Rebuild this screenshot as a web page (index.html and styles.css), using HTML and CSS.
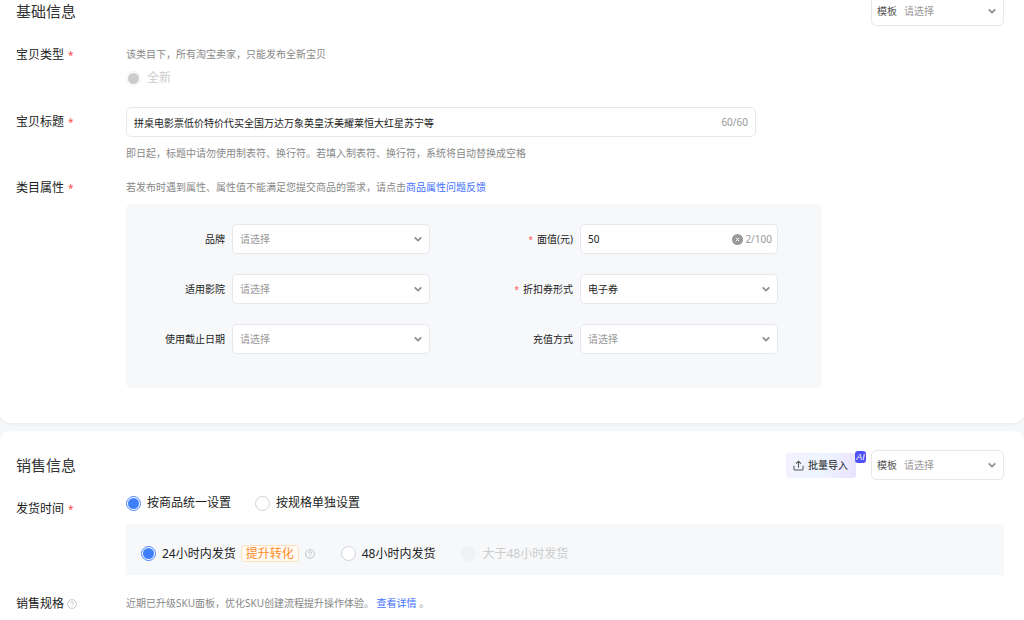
FILE: index.html
```html
<!DOCTYPE html>
<html lang="zh-CN">
<head>
    <meta charset="UTF-8">
    <meta name="viewport" content="width=device-width, initial-scale=1.0">
    <title>发布宝贝</title>
    <link rel="stylesheet" href="styles.css">
</head>
<body>
    <svg class="sprite" aria-hidden="true">
        <symbol id="arrow" viewBox="0 0 8 8">
            <path d="M0.7 2.3L4 5.5L7.3 2.3" fill="none" stroke="#8c8c8c" stroke-width="1.7"/>
        </symbol>
        <symbol id="help" viewBox="0 0 10 10">
            <circle cx="5" cy="5" r="4.4" fill="none" stroke="#b8b8b8" stroke-width="0.8"/>
            <path d="M3.6 4.1C3.6 2.2 6.5 2.2 6.5 4C6.5 5 5 5 5 6.1M5 6.9V7.7" fill="none" stroke="#b8b8b8" stroke-width="0.8"/>
        </symbol>
    </svg>

    <section class="card card-base">
        <div class="card-header">
            <h2>基础信息</h2>
            <div class="field template">
                <label for="baseTemplate">模板</label>
                <select id="baseTemplate"><option>请选择</option></select>
                <svg class="arrow"><use href="#arrow"/></svg>
            </div>
        </div>

        <div class="row row-type">
            <div class="row-label">宝贝类型<span class="required">*</span></div>
            <div class="row-content">
                <p class="hint">该类目下，所有淘宝卖家，只能发布全新宝贝</p>
                <label class="radio disabled"><input type="radio" name="type" checked disabled>全新</label>
            </div>
        </div>

        <div class="row row-title">
            <label class="row-label tall" for="title">宝贝标题<span class="required">*</span></label>
            <div class="row-content">
                <div class="field title-field">
                    <input type="text" id="title" value="拼桌电影票低价特价代买全国万达万象英皇沃美耀莱恒大红星苏宁等">
                    <span class="count">60/60</span>
                </div>
                <p class="hint">即日起，标题中请勿使用制表符、换行符。若填入制表符、换行符，系统将自动替换成空格</p>
            </div>
        </div>

        <div class="row">
            <div class="row-label">类目属性<span class="required">*</span></div>
            <div class="row-content">
                <p class="hint">若发布时遇到属性、属性值不能满足您提交商品的需求，请点击<a href="#">商品属性问题反馈</a></p>
                <div class="attrs">
                    <div class="attr">
                        <label for="brand">品牌</label>
                        <div class="field">
                            <select id="brand"><option>请选择</option></select>
                            <svg class="arrow"><use href="#arrow"/></svg>
                        </div>
                    </div>
                    <div class="attr">
                        <label for="price"><span class="required">*</span>面值(元)</label>
                        <div class="field price-field">
                            <input type="text" id="price" value="50">
                            <button type="button" class="clear" aria-label="清除">
                                <svg viewBox="0 0 11 11"><circle cx="5.5" cy="5.5" r="5.5" fill="#999"/><path d="M3.8 3.8L7.2 7.2M7.2 3.8L3.8 7.2" stroke="#fff" stroke-width="1"/></svg>
                            </button>
                            <span class="count">2/100</span>
                        </div>
                    </div>
                    <div class="attr">
                        <label for="cinema">适用影院</label>
                        <div class="field">
                            <select id="cinema"><option>请选择</option></select>
                            <svg class="arrow"><use href="#arrow"/></svg>
                        </div>
                    </div>
                    <div class="attr">
                        <label for="coupon"><span class="required">*</span>折扣券形式</label>
                        <div class="field">
                            <select id="coupon" class="filled"><option>电子券</option></select>
                            <svg class="arrow"><use href="#arrow"/></svg>
                        </div>
                    </div>
                    <div class="attr">
                        <label for="deadline">使用截止日期</label>
                        <div class="field">
                            <select id="deadline"><option>请选择</option></select>
                            <svg class="arrow"><use href="#arrow"/></svg>
                        </div>
                    </div>
                    <div class="attr">
                        <label for="recharge">充值方式</label>
                        <div class="field">
                            <select id="recharge"><option>请选择</option></select>
                            <svg class="arrow"><use href="#arrow"/></svg>
                        </div>
                    </div>
                </div>
            </div>
        </div>
    </section>

    <section class="card card-sale">
        <div class="card-header">
            <h2>销售信息</h2>
            <button type="button" class="import">
                <svg viewBox="0 0 12 12"><path d="M6 8.5V1.4M3.3 4L6 1.3L8.7 4M1 6.3V9.5Q1 11 2.5 11H9.5Q11 11 11 9.5V6.3" fill="none" stroke="#555" stroke-width="1.1"/></svg>
                批量导入
                <span class="ai">AI</span>
            </button>
            <div class="field template">
                <label for="saleTemplate">模板</label>
                <select id="saleTemplate"><option>请选择</option></select>
                <svg class="arrow"><use href="#arrow"/></svg>
            </div>
        </div>

        <div class="row row-delivery">
            <div class="row-label">发货时间<span class="required">*</span></div>
            <div class="row-content">
                <div class="radios">
                    <label class="radio"><input type="radio" name="mode" checked>按商品统一设置</label>
                    <label class="radio"><input type="radio" name="mode">按规格单独设置</label>
                </div>
                <div class="delivery">
                    <label class="radio"><input type="radio" name="time" checked>24小时内发货</label>
                    <span class="tag">提升转化</span>
                    <svg class="help"><use href="#help"/></svg>
                    <label class="radio"><input type="radio" name="time">48小时内发货</label>
                    <label class="radio disabled"><input type="radio" name="time" disabled>大于48小时发货</label>
                </div>
            </div>
        </div>

        <div class="row">
            <div class="row-label">销售规格<svg class="help"><use href="#help"/></svg></div>
            <div class="row-content">
                <p class="hint">近期已升级SKU面板，优化SKU创建流程提升操作体验。 <a href="#">查看详情</a> 。</p>
            </div>
        </div>
    </section>
</body>
</html>
```
FILE: styles.css
```css
* {
    box-sizing: border-box;
}

body {
    margin: 0;
    background-color: #f6f7f9;
    color: #222;
    font-family: "Noto Sans", "Noto Sans CJK SC", sans-serif;
    font-size: 12px;
    line-height: 20px;
}

h2 {
    margin: 0 auto 0 0;
    color: #333;
    font-size: 15px;
    font-weight: normal;
}

p {
    margin: 0;
}

a {
    color: #4270ff;
    text-decoration: none;
}

input,
select,
button {
    margin: 0;
    padding: 0;
    border: none;
    background: none;
    color: inherit;
    font: inherit;
    outline: none;
}

.sprite {
    display: none;
}

.card {
    padding: 0 20px 0 16px;
    background-color: #fff;
}

.card-base {
    padding-bottom: 35px;
    border-radius: 0 0 10px 10px;
    box-shadow: 0 1px 4px rgba(0, 0, 0, 0.05);
}

.card-sale {
    min-height: 200px;
    margin-top: 8px;
    padding-top: 19px;
    border-radius: 10px 10px 0 0;
}

.card-header {
    display: flex;
    align-items: center;
    height: 30px;
}

/* the page is scrolled a little past the first header */
.card-base .card-header {
    margin-top: -4px;
}

.row {
    display: flex;
}

.row-type {
    margin-top: 18px;
}

.row-title {
    margin: 19px 0 14px;
}

.row-delivery {
    margin: 13px 0 18px;
}

.row-label {
    flex: 0 0 110px;
    padding-top: 1px;
}

.row-label.tall {
    line-height: 28px;
}

.row-delivery .row-label {
    padding-top: 6px;
}

.required {
    color: #ff4d4f;
    font-size: 10px;
}

.row-label .required {
    margin-left: 4px;
}

.row-label .help {
    margin-left: 3px;
    vertical-align: -1px;
}

.row-content {
    flex: 1;
    min-width: 0;
}

.hint {
    color: #888;
    font-size: 10px;
}

.field {
    display: flex;
    align-items: center;
    height: 30px;
    padding: 0 7px;
    border: 1px solid #e6e8ed;
    border-radius: 5px;
    background-color: #fff;
    font-size: 10px;
}

.field input,
.field select {
    flex: 1;
    min-width: 0;
    height: 28px;
}

.field select {
    appearance: none;
    color: #999;
}

.field select.filled {
    color: #222;
}

.arrow {
    flex: none;
    width: 8px;
    height: 8px;
}

.count {
    color: #999;
}

.template {
    width: 133px;
    padding-left: 5px;
}

.template label {
    margin-right: 7px;
    color: #555;
}

.title-field {
    max-width: 630px;
    margin-bottom: 6px;
}

.attrs {
    display: grid;
    grid-template-columns: 1fr 1fr;
    row-gap: 20px;
    max-width: 696px;
    margin-top: 7px;
    padding: 20px 0 34px;
    border-radius: 5px;
    background-color: #f6f8fa;
}

.attr {
    display: flex;
    align-items: center;
    gap: 7px;
    padding-right: 44px;
    font-size: 10px;
}

.attr label {
    flex: 1;
    text-align: right;
}

.attr .required {
    margin-right: 4px;
    font-size: 8px;
}

.attr .field {
    width: 198px;
}

.attr .price-field {
    padding-right: 5px;
}

.clear {
    display: flex;
    margin-right: 2px;
    cursor: pointer;
}

.clear svg {
    width: 11px;
    height: 11px;
}

.import {
    position: relative;
    display: flex;
    align-items: center;
    gap: 4px;
    height: 25px;
    margin-right: 15px;
    padding: 0 8px 0 7px;
    border-radius: 3px;
    background: linear-gradient(100deg, #f4f0ff, #edf5ff 50%, #eae2ff);
    color: #222;
    font-size: 10px;
    cursor: pointer;
}

.import svg {
    width: 11px;
    height: 11px;
}

.ai {
    position: absolute;
    top: -2px;
    right: -10px;
    width: 11px;
    height: 12px;
    border-radius: 3px;
    background-color: #5050f5;
    color: #fff;
    font-family: "Liberation Sans", sans-serif;
    font-size: 9px;
    font-style: italic;
    line-height: 12px;
    text-align: center;
}

.radios {
    display: flex;
    gap: 24px;
    margin-bottom: 11px;
}

.radio {
    display: flex;
    align-items: center;
    gap: 6px;
}

.radio input {
    appearance: none;
    width: 15px;
    height: 15px;
    padding: 1px;
    border: 1px solid #d0d3dc;
    border-radius: 50%;
    background-color: #fff;
}

.radio input:checked {
    border-color: #4a84ff;
    background-color: #3d7fff;
    background-clip: content-box;
}

.radio.disabled {
    color: #ccc;
}

.row-type .radio {
    margin-top: 4px;
}

.radio input:disabled {
    border-color: #f0f1f5;
    background-color: #f0f1f5;
}

.radio input:disabled:checked {
    background-color: #ccc;
}

.delivery {
    display: flex;
    align-items: center;
    height: 51px;
    padding: 8px 15px 0;
    background-color: #f6f8fa;
}

.tag {
    margin: 0 6px 0 5px;
    padding: 0 4px;
    border: 1px solid #ffe2bd;
    border-radius: 4px;
    background-color: #fffaf3;
    color: #ff8a1f;
    line-height: 15px;
}

.help {
    width: 10px;
    height: 10px;
}

.delivery .help,
.delivery .help + .radio {
    margin-right: 26px;
}
```
